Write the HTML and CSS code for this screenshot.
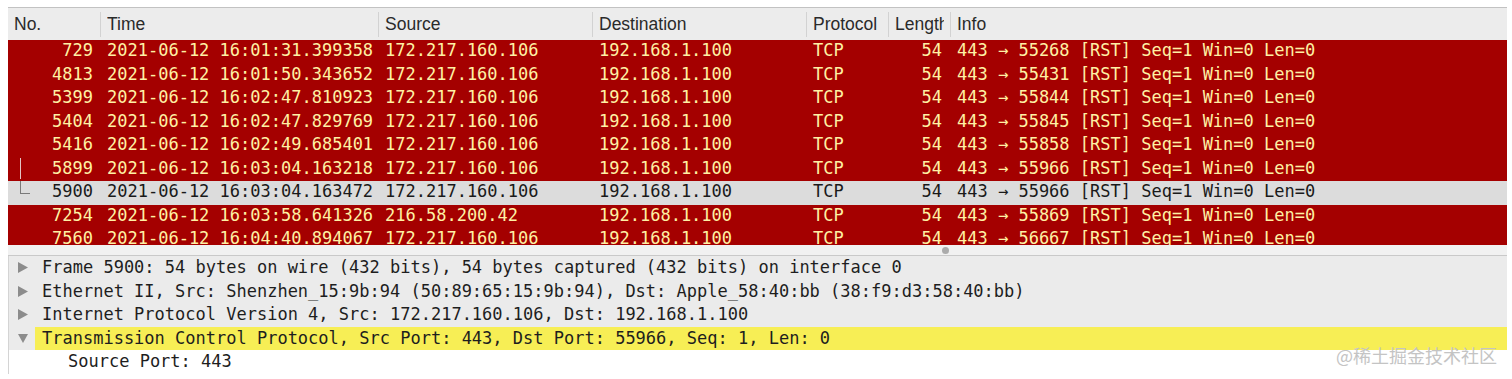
FILE: index.html
```html
<!DOCTYPE html>
<html lang="en">
<head>
  <meta charset="UTF-8">
  <title>Wireshark</title>
  <link rel="stylesheet" href="styles.css">
</head>
<body>
  <div class="capture">
    <div class="head">
      <div class="col"><span>No.</span></div>
      <div class="col sep"><span>Time</span></div>
      <div class="col sep"><span>Source</span></div>
      <div class="col sep"><span>Destination</span></div>
      <div class="col sep"><span>Protocol</span></div>
      <div class="col sep"><span>Length</span></div>
      <div class="col sep"><span>Info</span></div>
    </div>

    <div class="list">
      <div class="row bad">
        <div class="no">729</div><div>2021-06-12 16:01:31.399358</div><div>172.217.160.106</div><div>192.168.1.100</div><div>TCP</div><div class="len">54</div><div>443 → 55268 [RST] Seq=1 Win=0 Len=0</div>
      </div>
      <div class="row bad">
        <div class="no">4813</div><div>2021-06-12 16:01:50.343652</div><div>172.217.160.106</div><div>192.168.1.100</div><div>TCP</div><div class="len">54</div><div>443 → 55431 [RST] Seq=1 Win=0 Len=0</div>
      </div>
      <div class="row bad">
        <div class="no">5399</div><div>2021-06-12 16:02:47.810923</div><div>172.217.160.106</div><div>192.168.1.100</div><div>TCP</div><div class="len">54</div><div>443 → 55844 [RST] Seq=1 Win=0 Len=0</div>
      </div>
      <div class="row bad">
        <div class="no">5404</div><div>2021-06-12 16:02:47.829769</div><div>172.217.160.106</div><div>192.168.1.100</div><div>TCP</div><div class="len">54</div><div>443 → 55845 [RST] Seq=1 Win=0 Len=0</div>
      </div>
      <div class="row bad">
        <div class="no">5416</div><div>2021-06-12 16:02:49.685401</div><div>172.217.160.106</div><div>192.168.1.100</div><div>TCP</div><div class="len">54</div><div>443 → 55858 [RST] Seq=1 Win=0 Len=0</div>
      </div>
      <div class="row bad">
        <div class="no related">5899</div><div>2021-06-12 16:03:04.163218</div><div>172.217.160.106</div><div>192.168.1.100</div><div>TCP</div><div class="len">54</div><div>443 → 55966 [RST] Seq=1 Win=0 Len=0</div>
      </div>
      <div class="row selected">
        <div class="no last">5900</div><div>2021-06-12 16:03:04.163472</div><div>172.217.160.106</div><div>192.168.1.100</div><div>TCP</div><div class="len">54</div><div>443 → 55966 [RST] Seq=1 Win=0 Len=0</div>
      </div>
      <div class="row bad">
        <div class="no">7254</div><div>2021-06-12 16:03:58.641326</div><div>216.58.200.42</div><div>192.168.1.100</div><div>TCP</div><div class="len">54</div><div>443 → 55869 [RST] Seq=1 Win=0 Len=0</div>
      </div>
      <div class="row bad">
        <div class="no">7560</div><div>2021-06-12 16:04:40.894067</div><div>172.217.160.106</div><div>192.168.1.100</div><div>TCP</div><div class="len">54</div><div>443 → 56667 [RST] Seq=1 Win=0 Len=0</div>
      </div>
    </div>

    <div class="splitter"><span class="grip"></span></div>

    <div class="details">
      <div class="item shade">
        <div class="toggle"><svg width="10" height="11" viewBox="0 0 10 11"><polygon points="0,0 10,5.5 0,11" fill="#8c8c8c"/></svg></div>
        <div class="label">Frame 5900: 54 bytes on wire (432 bits), 54 bytes captured (432 bits) on interface 0</div>
      </div>
      <div class="item shade">
        <div class="toggle"><svg width="10" height="11" viewBox="0 0 10 11"><polygon points="0,0 10,5.5 0,11" fill="#8c8c8c"/></svg></div>
        <div class="label">Ethernet II, Src: Shenzhen_15:9b:94 (50:89:65:15:9b:94), Dst: Apple_58:40:bb (38:f9:d3:58:40:bb)</div>
      </div>
      <div class="item shade">
        <div class="toggle"><svg width="10" height="11" viewBox="0 0 10 11"><polygon points="0,0 10,5.5 0,11" fill="#8c8c8c"/></svg></div>
        <div class="label">Internet Protocol Version 4, Src: 172.217.160.106, Dst: 192.168.1.100</div>
      </div>
      <div class="item shade">
        <div class="toggle"><svg width="10" height="9" viewBox="0 0 10 9"><polygon points="0,0 10,0 5,9" fill="#8c8c8c"/></svg></div>
        <div class="label marked">Transmission Control Protocol, Src Port: 443, Dst Port: 55966, Seq: 1, Len: 0</div>
      </div>
      <div class="item">
        <div class="toggle"></div>
        <div class="label child">Source Port: 443</div>
      </div>
    </div>

    <div class="watermark">@稀土掘金技术社区</div>
  </div>
</body>
</html>
```

FILE: styles.css
```css
body {
  margin: 0;
  background: #fff;
}

.capture {
  position: relative;
  margin: 7px 5px 0 8px;
  height: 372px;
  overflow: hidden;
}

.head,
.row {
  display: grid;
  grid-template-columns: 92px 278px 214px 214px 82px 62px 1fr;
}

.head {
  height: 32px;
  align-items: center;
  background: #ececec;
  border-top: 1px solid #c2c2c2;
  font-family: "Liberation Sans", Arial, sans-serif;
  font-size: 17.5px;
  color: #2a2a2a;
}

.head .col {
  height: 25px;
  line-height: 25px;
  padding: 0 6px;
  white-space: nowrap;
}

.head .col span {
  display: block;
  overflow: hidden;
}

.head .sep {
  border-left: 1px solid #d2d2d2;
}

.list {
  height: 205px;
  overflow: hidden;
  font-family: "DejaVu Sans Mono", monospace;
  font-size: 17px;
}

.row {
  height: 23.5px;
  line-height: 21.5px;
  padding-bottom: 2px;
  box-sizing: border-box;
  white-space: nowrap;
}

.row > div {
  padding-left: 7px;
  overflow: hidden;
}

.row .no,
.row .len {
  padding-left: 0;
  text-align: right;
}

.row .no {
  position: relative;
  padding-right: 7px;
}

.row .len {
  padding-right: 8px;
}

.bad {
  background: #a40000;
  color: #fff1a4;
}

.selected {
  background: #dcdcdc;
  color: #1a1a1a;
}

/* related packet markers */
.no.related::before {
  content: "";
  position: absolute;
  left: 12px;
  top: 0;
  height: 25px;
  border-left: 1px solid #e2c4c4;
}

.no.last::before {
  content: "";
  position: absolute;
  left: 12px;
  top: 0;
  width: 9px;
  height: 12px;
  border-left: 1px solid #7a7a7a;
  border-bottom: 1px solid #7a7a7a;
}

.splitter {
  height: 10px;
  background: #f1f1f1;
  border-bottom: 1px solid #c9c9c9;
  display: flex;
  align-items: center;
  padding-left: 934px;
}

.grip {
  width: 7px;
  height: 7px;
  border-radius: 50%;
  background: #ababab;
}

.details {
  border-left: 1px solid #d4d4d4;
  font-family: "DejaVu Sans Mono", monospace;
  font-size: 17px;
  color: #1e1e1e;
}

.item {
  display: flex;
  height: 23.5px;
  line-height: 23.5px;
}

.item.shade {
  background: #ebebeb;
}

.toggle {
  width: 26px;
  flex: none;
  display: flex;
  align-items: center;
  padding-left: 9px;
  box-sizing: border-box;
}

.label {
  flex: 1;
  padding-left: 7px;
  white-space: nowrap;
}

.label.marked {
  background: #f7ee55;
}

.label.child {
  padding-left: 33px;
}

.watermark {
  position: absolute;
  right: 10px;
  top: 335px;
  font-family: "Noto Sans CJK SC", sans-serif;
  font-size: 18px;
  color: #c4c4c4;
}
```
